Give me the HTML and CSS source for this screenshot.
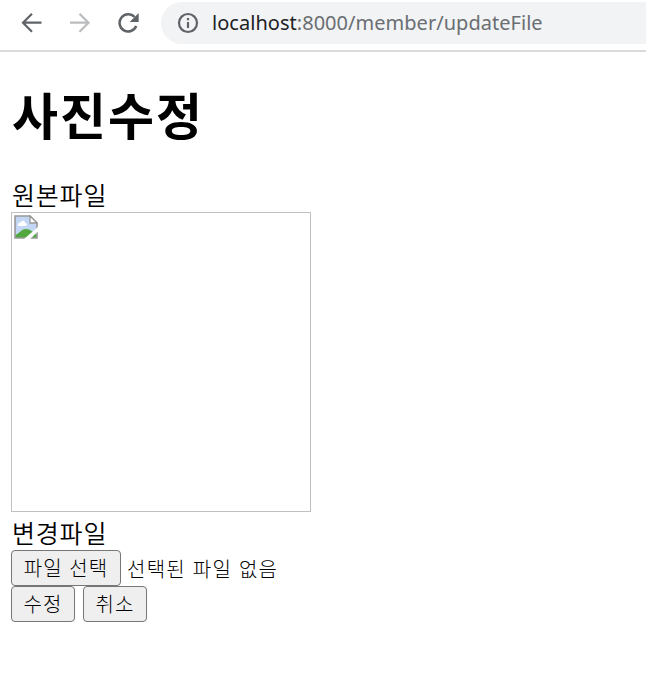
FILE: index.html
```html
<!DOCTYPE html>
<html lang="ko">
<head>
<meta charset="utf-8">
<title>사진수정</title>
<link rel="stylesheet" href="styles.css">
</head>
<body>
<header class="toolbar">
  <svg class="nav-icon back" viewBox="0 0 22 22"><path d="M20.5 10.7H2.5M11 1.7L2 10.7L11 19.7"/></svg>
  <svg class="nav-icon forward" viewBox="0 0 22 22"><path d="M1 10.7H19M10.5 1.7L19.5 10.7L10.5 19.7"/></svg>
  <svg class="nav-icon reload" viewBox="0 0 22 22"><path d="M18.2 14A8.6 8.6 0 1 1 16.5 5"/><path class="solid" d="M20.7 1V10H11.7Z"/></svg>
  <div class="address">
    <svg class="info" viewBox="0 0 22 22"><circle cx="11" cy="11" r="9"/><path d="M11 10V16M11 6V8.3"/></svg>
    <span class="url"><span class="host">localhost</span>:8000/member/updateFile</span>
  </div>
</header>
<main class="page">
  <h1 class="title">사진수정</h1>
  <div class="label">원본파일</div>
  <div class="photo">
    <svg class="broken" viewBox="0 0 24 24">
      <path fill="#c3d7f5" d="M1 1H16L23 8V23H1Z"/>
      <path fill="#fff" d="M4 10C4 7 7 8 7 7C9 4 12 7 11 8C14 8 13 11 11 11H4Z"/>
      <path fill="#52a83e" d="M1 23V20C5 19 7 14 12 14C16 14 19 17 23 20V23Z"/>
      <path fill="none" stroke="#999" stroke-width="1.6" d="M1 1H16L23 8V23H1Z"/>
      <path fill="#fff" stroke="#999" stroke-width="1.3" d="M16 1V8H23Z"/>
      <path fill="#fff" d="M24 12V16.5L16 24H10Z"/>
    </svg>
  </div>
  <div class="label second">변경파일</div>
  <div class="row"><button class="btn file">파일 선택</button><span class="status">선택된 파일 없음</span></div>
  <div class="row actions"><button class="btn">수정</button><button class="btn">취소</button></div>
</main>
</body>
</html>
```
FILE: styles.css
```css
* { box-sizing: border-box; }
body { margin: 0; background: #fff; color: #000; font-family: "Noto Sans CJK KR", sans-serif; }
.toolbar { display: flex; align-items: flex-start; height: 52px; padding-top: 2px; border-bottom: 2px solid #dadada; }
.nav-icon { flex: none; width: 22px; height: 22px; margin-top: 10px; fill: none; stroke: #5f6368; stroke-width: 2.2; }
.back { margin-left: 21px; }
.forward { margin-left: 26px; stroke: #babcbe; }
.reload { margin-left: 27px; stroke-width: 2.5; }
.solid { fill: #5f6368; stroke: none; }
.address { display: flex; align-items: center; flex: 1; height: 42px; margin-left: 21px; padding-left: 16px; border-radius: 21px 0 0 21px; background: #f1f3f4; }
.info { flex: none; width: 22px; height: 22px; fill: none; stroke: #5f6368; stroke-width: 2.2; }
.url { margin-left: 13px; font: 20px/44px "Noto Sans", sans-serif; letter-spacing: 0.03px; color: #6a6e72; white-space: nowrap; }
.host { color: #202124; }
.page { padding: 0 11px; }
.title { margin: 28px 0 0; height: 70px; padding-left: 1px; font-size: 50px; line-height: 66px; font-weight: 700; letter-spacing: 2px; }
.label { height: 32px; margin-top: 30px; padding-left: 1px; font-size: 25px; line-height: 28px; font-weight: 350; letter-spacing: 0.8px; }
.photo { width: 300px; height: 300px; padding: 2px; border: 1px solid #c0c0c0; }
.broken { display: block; width: 24px; height: 24px; }
.second { height: 34px; margin-top: 4px; line-height: 32px; }
.row { display: flex; height: 36px; }
.btn { width: 64px; height: 36px; padding: 0; border: 1px solid #767676; border-radius: 4px; background: #efefef; color: #000; font: 300 20px/34px "Noto Sans CJK KR", sans-serif; letter-spacing: 1.1px; white-space: nowrap; }
.file { width: 110px; }
.status { margin-left: 6px; font-size: 20px; font-weight: 300; line-height: 37px; letter-spacing: 1.25px; }
.actions { gap: 8px; }
```
